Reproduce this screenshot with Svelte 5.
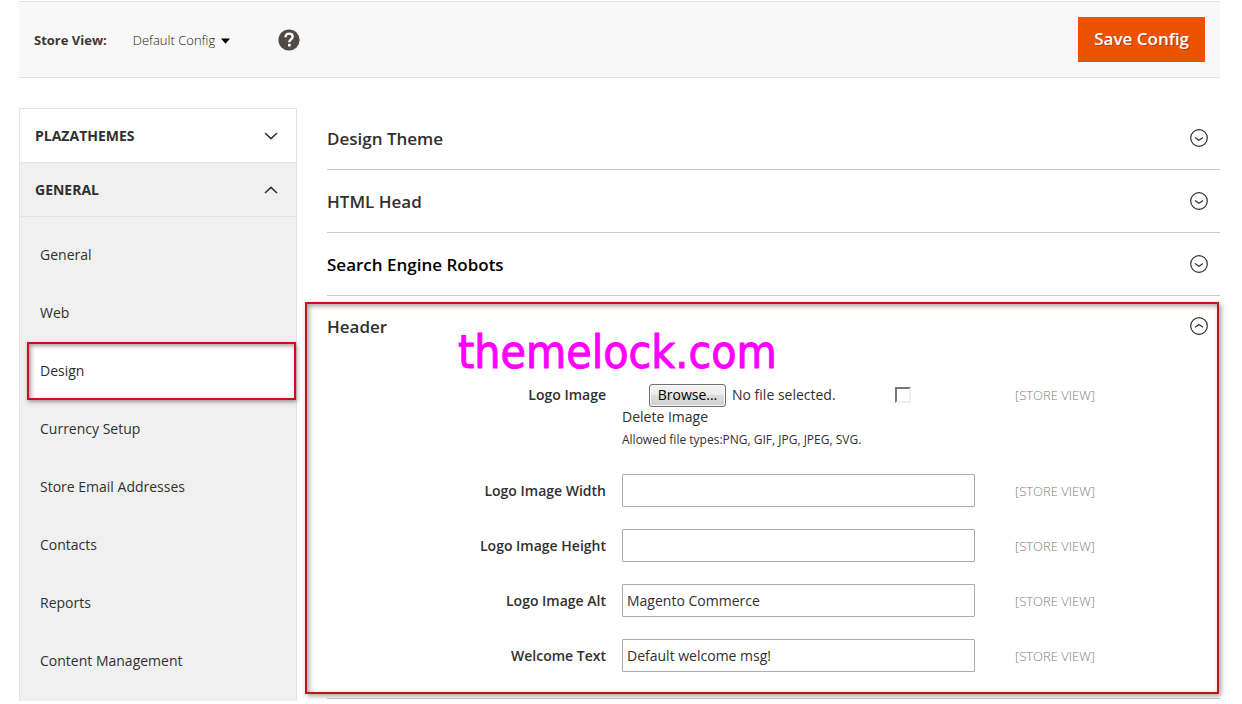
<script>
  const navItems = [
    'General',
    'Web',
    'Design',
    'Currency Setup',
    'Store Email Addresses',
    'Contacts',
    'Reports',
    'Content Management'
  ];
  const activeItem = 'Design';

  const closedSections = [
    { title: 'Design Theme', strong: false },
    { title: 'HTML Head', strong: false },
    { title: 'Search Engine Robots', strong: true }
  ];

  let fields = $state([
    { id: 'logo-width', label: 'Logo Image Width', value: '' },
    { id: 'logo-height', label: 'Logo Image Height', value: '' },
    { id: 'logo-alt', label: 'Logo Image Alt', value: 'Magento Commerce' },
    { id: 'welcome', label: 'Welcome Text', value: 'Default welcome msg!' }
  ]);

  let filePicker;
</script>

{#snippet roundChevron(up)}
  <svg class="round" viewBox="0 0 18 18" aria-hidden="true">
    <circle cx="9" cy="9" r="8.3" />
    <path d={up ? 'M5 10.3 L9 7.5 L13 10.3' : 'M5 8.5 L9 11.3 L13 8.5'} />
  </svg>
{/snippet}

<div class="page">
  <header class="toolbar">
    <label class="store-label" for="store-view">Store View:</label>
    <div class="store-switch">
      <select id="store-view">
        <option>Default Config</option>
      </select>
      <svg class="caret" viewBox="0 0 9 6" aria-hidden="true"><path d="M0 0.5H9L4.5 5.8Z" /></svg>
    </div>
    <a class="help" href="#help" aria-label="Help">
      <svg viewBox="0 0 22 22" aria-hidden="true">
        <circle cx="11" cy="11" r="10.6" fill="#514943" />
        <path d="M7.5 8.2C7.6 5.9 9 4.6 11.2 4.6C13.4 4.6 14.7 5.9 14.7 7.7C14.7 10.2 11.3 10.3 11.3 13.2" fill="none" stroke="#fff" stroke-width="2.4" />
        <rect x="10" y="14.8" width="2.7" height="2.7" fill="#fff" />
      </svg>
    </a>
    <button class="save" type="button">Save Config</button>
  </header>

  <div class="workspace">
    <nav class="sidebar">
      <button class="group" type="button">
        PLAZATHEMES
        <svg viewBox="0 0 14 8" aria-hidden="true"><path d="M1 1 L7 6.6 L13 1" /></svg>
      </button>
      <button class="group open" type="button">
        GENERAL
        <svg viewBox="0 0 14 8" aria-hidden="true"><path d="M1 7 L7 1.4 L13 7" /></svg>
      </button>
      <ul>
        {#each navItems as item}
          <li class:active={item === activeItem}><a href="#nav">{item}</a></li>
        {/each}
      </ul>
    </nav>

    <main>
      {#each closedSections as section}
        <section>
          <button class="section-head" class:strong={section.strong} type="button">
            {section.title}
            {@render roundChevron(false)}
          </button>
        </section>
      {/each}

      <section class="expanded">
        <button class="section-head" type="button">
          Header
          {@render roundChevron(true)}
        </button>

        <form>
          <div class="row">
            <label for="logo-file">Logo Image</label>
            <div class="control">
              <div class="file-line">
                <button id="logo-file" class="browse" type="button" onclick={() => filePicker.click()}>Browse...</button>
                <input type="file" hidden bind:this={filePicker} />
                <span>No file selected.</span>
                <input id="delete-image" class="tick" type="checkbox" />
              </div>
              <label class="delete" for="delete-image">Delete Image</label>
              <p>Allowed file types:PNG, GIF, JPG, JPEG, SVG.</p>
            </div>
            <span class="scope">[STORE VIEW]</span>
          </div>
          {#each fields as field}
            <div class="row">
              <label for={field.id}>{field.label}</label>
              <div class="control">
                <input id={field.id} class="text" type="text" bind:value={field.value} />
              </div>
              <span class="scope">[STORE VIEW]</span>
            </div>
          {/each}
        </form>

        <div class="outline"></div>
        <div class="watermark">themelock.com</div>
      </section>
    </main>
  </div>
</div>

<style>
  :global(body) {
    margin: 0;
    background: #fff;
  }

  .page {
    box-sizing: border-box;
    padding: 1px 22px 0 19px;
    font-family: 'Open Sans', sans-serif;
    font-size: 14px;
    color: #303030;
  }

  .page :global(*) {
    box-sizing: border-box;
  }

  button,
  input,
  select {
    font: inherit;
    color: inherit;
  }

  a {
    color: inherit;
    text-decoration: none;
  }

  .toolbar {
    display: flex;
    align-items: center;
    padding: 15px;
    background: #f8f8f8;
    border-top: 1px solid #e3e3e3;
    border-bottom: 1px solid #e3e3e3;
  }

  .store-label {
    font-size: 13px;
    font-weight: 700;
    color: #41362f;
  }

  .store-switch {
    display: flex;
    align-items: center;
    margin-left: 26px;
  }

  .store-switch select {
    field-sizing: content;
    appearance: none;
    border: 0;
    padding: 0;
    background: none;
    font-size: 13px;
    font-weight: 300;
    color: #1c1815;
  }

  .caret {
    width: 9px;
    height: 6px;
    margin-top: 2px;
    margin-left: 6px;
    fill: #000;
  }

  .help {
    margin-left: 48px;
    height: 22px;
  }

  .help svg {
    display: block;
    width: 22px;
    height: 22px;
  }

  .save {
    margin-left: auto;
    height: 45px;
    padding: 0 16px 2px;
    border: 0;
    background: #eb5202;
    color: #fff;
    font-size: 17px;
    font-weight: 600;
    text-shadow: 1px 1px 0 rgba(0, 0, 0, 0.25);
  }

  .workspace {
    display: flex;
    align-items: flex-start;
    gap: 30px;
    padding-top: 29px;
  }

  .sidebar {
    flex: 0 0 278px;
    margin-top: 1px;
    background: #f0f0f0;
    border: 1px solid #e3e3e3;
    border-bottom: 0;
  }

  .group {
    display: flex;
    align-items: center;
    justify-content: space-between;
    width: 100%;
    height: 54px;
    padding: 0 18px 0 15px;
    border: 0;
    border-bottom: 1px solid #e3e3e3;
    background: #fff;
    font-weight: 700;
  }

  .group.open {
    background: #f0f0f0;
  }

  .group svg {
    width: 14px;
    height: 8px;
    fill: none;
    stroke: #303030;
    stroke-width: 1.5;
  }

  ul {
    margin: 0;
    padding: 9px 0 11px;
    list-style: none;
  }

  li a {
    display: flex;
    align-items: center;
    height: 58px;
    padding: 0 0 2px 20px;
  }

  li.active {
    margin-left: 7px;
    border: 2px solid #c4141a;
    background: #fff;
    box-shadow:
      1px 2px 4px rgba(90, 60, 60, 0.5),
      inset 2px 2px 4px rgba(90, 60, 60, 0.5);
  }

  li.active a {
    height: 54px;
    padding-left: 11px;
    font-weight: 500;
  }

  main {
    flex: 1;
    min-width: 0;
  }

  section {
    border-bottom: 1px solid #cccccc;
  }

  .expanded {
    position: relative;
  }

  .section-head {
    display: flex;
    align-items: center;
    justify-content: space-between;
    width: 100%;
    height: 62px;
    padding: 0 12px 0 0;
    border: 0;
    background: none;
    font-size: 17px;
    font-weight: 600;
  }

  .expanded .section-head {
    height: 60px;
  }

  .strong {
    color: #000;
  }

  .round {
    width: 18px;
    height: 18px;
    fill: none;
    stroke: #303030;
    stroke-width: 1.2;
  }

  form {
    padding: 28px 0 4px;
  }

  .row {
    display: grid;
    grid-template-columns: 279fr 369fr 245fr;
    margin-bottom: 22px;
    line-height: 22px;
  }

  .row > label {
    padding-top: 6px;
    text-align: right;
    font-weight: 600;
  }

  .row:first-child > label,
  .row:first-child > .scope {
    padding-top: 0;
  }

  .control {
    min-width: 0;
    padding-left: 16px;
  }

  .file-line {
    display: flex;
    align-items: center;
    height: 22px;
    padding-left: 27px;
  }

  .browse {
    width: 77px;
    height: 23px;
    margin-right: 6px;
    padding: 0;
    border: 1px solid #707070;
    border-radius: 3px;
    background: linear-gradient(#f3f3f3 0%, #ebebeb 50%, #dddddd 50%, #cfcfcf 100%);
    box-shadow: inset 0 0 0 1px #fafafa;
    line-height: 20px;
    color: #000;
  }

  .tick {
    appearance: none;
    width: 16px;
    height: 16px;
    margin: 0 64px 0 auto;
    border: 2px solid #f0f0f0;
    border-top-color: #767676;
    border-left-color: #767676;
    background: #fff;
  }

  .delete {
    display: block;
  }

  p {
    margin: 0;
    font-size: 12px;
    line-height: 24px;
  }

  .text {
    display: block;
    width: 100%;
    height: 33px;
    padding: 0 4px;
    border: 1px solid #adadad;
    border-radius: 1px;
    background: #fff;
  }

  .scope {
    padding: 6px 0 0 40px;
    font-size: 13px;
    font-weight: 300;
    color: #808080;
  }

  .outline {
    position: absolute;
    top: 6px;
    right: 1px;
    bottom: 4px;
    left: -22px;
    border: 2px solid #c4141a;
    box-shadow:
      2px 2px 5px rgba(90, 60, 60, 0.5),
      inset 2px 2px 5px rgba(90, 60, 60, 0.5);
    pointer-events: none;
  }

  .watermark {
    position: absolute;
    top: 28px;
    left: 131px;
    font-family: 'DejaVu Sans Condensed', 'DejaVu Sans', sans-serif;
    font-size: 46px;
    line-height: 56px;
    color: #ff00ff;
    -webkit-text-stroke: 1px #ff00ff;
    pointer-events: none;
  }
</style>
